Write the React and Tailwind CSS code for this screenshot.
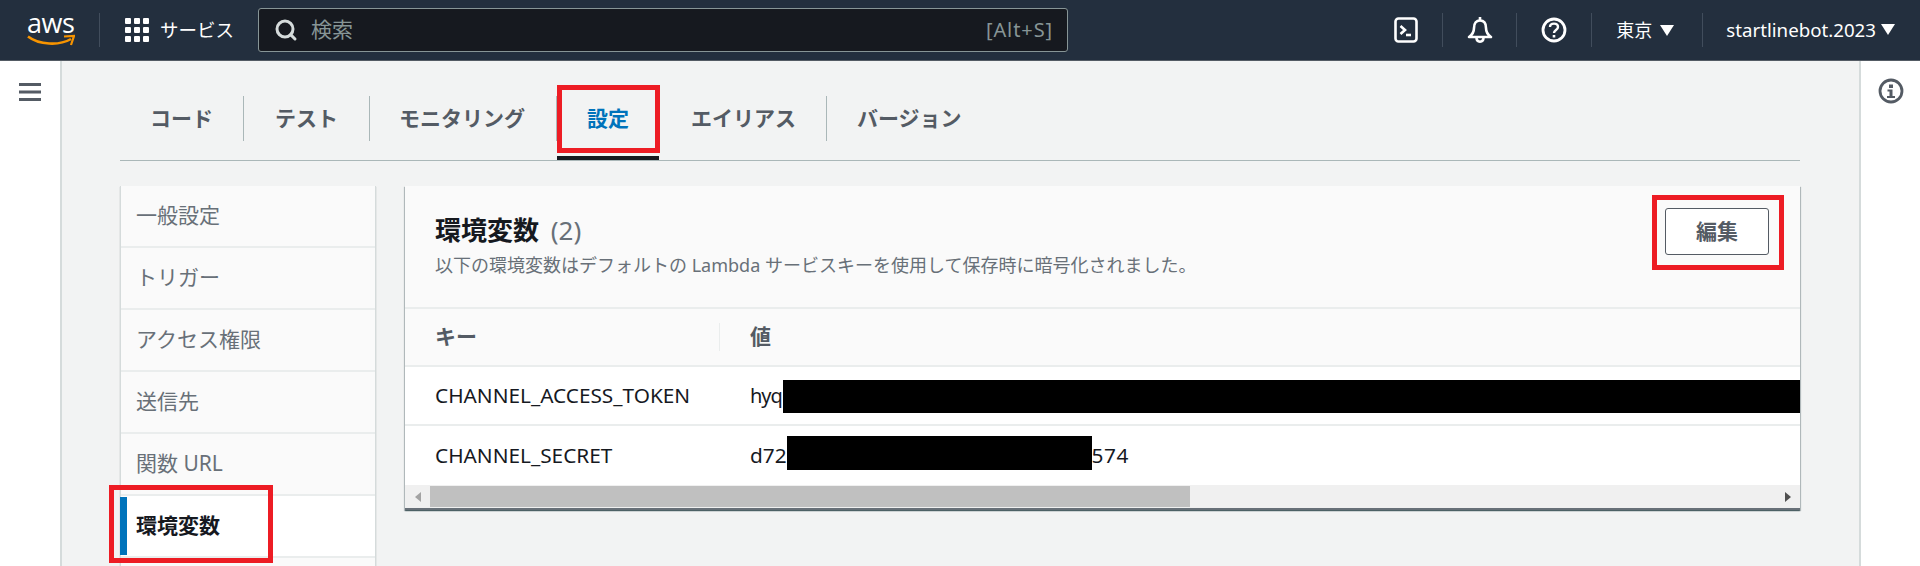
// App.jsx - Lambda configuration / environment variables
import { Search } from 'lucide-react'

const font = 'font-["Noto_Sans","Noto_Sans_CJK_JP",sans-serif]'

const sideItems = ['一般設定', 'トリガー', 'アクセス権限', '送信先', '関数 URL']

function RedBox({ className }) {
  return <div className={`absolute border-[5px] border-[#ed1c24] pointer-events-none ${className}`} />
}

function Caret() {
  return <span className="block w-0 h-0 border-x-[7px] border-x-transparent border-t-[11px] border-t-white" />
}

function HeaderDivider() {
  return <div className="w-px h-[34px] bg-[#414d5c]" />
}

function Header() {
  return (
    <header className="flex items-center h-[61px] shrink-0 bg-[#232f3e] border-b border-[#545b64] text-white">
      <div className="w-[99px] pl-[27px] flex flex-col items-start">
        <span className="text-[27px] leading-[22px] tracking-[-0.5px] font-['Open_Sans',sans-serif]">aws</span>
        <svg width="48" height="14" viewBox="0 0 48 14">
          <path d="M1 2.5 C12 11 32 12 44 5" fill="none" stroke="#f79400" strokeWidth="2.6" />
          <path d="M37 2.5 L47 2 L44 11" fill="none" stroke="#f79400" strokeWidth="2.2" />
        </svg>
      </div>
      <HeaderDivider />
      <div className="flex items-center pl-[25px] w-[158px]">
        <div className="grid grid-cols-3 gap-[3px] w-[24px] shrink-0 mr-[11px]">
          {[...Array(9)].map((_, i) => (
            <span key={i} className="w-[6px] h-[6px] bg-white rounded-[1px]" />
          ))}
        </div>
        <span className="text-[18.5px] whitespace-nowrap">サービス</span>
      </div>
      <div className="flex items-center w-[810px] h-[44px] bg-[#16191f] border border-[#879596] rounded-[3px] pl-[15px] pr-[14px]">
        <Search size={24} strokeWidth={3} className="text-[#d5dbdb] mr-[13px]" />
        <span className="flex-1 text-[21px] text-[#879596]">検索</span>
        <span className="text-[20px] tracking-[0.9px] text-[#879596]">[Alt+S]</span>
      </div>
      <div className="flex-1" />
      <div className="w-[72px] flex justify-center">
        <svg width="24" height="26" viewBox="0 0 24 26" fill="none" stroke="white" strokeWidth="2.6">
          <rect x="1.5" y="1.5" width="21" height="23" rx="3" />
          <path d="M6.5 9 L11 13 L6.5 17" />
          <path d="M12 18 H17" />
        </svg>
      </div>
      <HeaderDivider />
      <div className="w-[73px] flex justify-center">
        <svg width="26" height="28" viewBox="0 0 26 28" fill="none" stroke="white" strokeWidth="2.6">
          <path d="M13 1 V4" />
          <path d="M7 12 C7 7 9.5 4.5 13 4.5 C16.5 4.5 19 7 19 12 C19 16 21 19 24 21 H2 C5 19 7 16 7 12 Z" strokeLinejoin="round" />
          <path d="M9.5 21.5 C9.5 27 16.5 27 16.5 21.5" />
        </svg>
      </div>
      <HeaderDivider />
      <div className="w-[74px] flex justify-center">
        <svg width="26" height="26" viewBox="0 0 26 26" fill="none" stroke="white" strokeWidth="2.8">
          <circle cx="13" cy="13" r="11" />
          <path d="M9 10 C9 5.5 17 5.5 17 10 C17 13 13 13 13 16" strokeWidth="2.4" />
          <path d="M13 18 V20.5" strokeWidth="2.6" />
        </svg>
      </div>
      <HeaderDivider />
      <div className="w-[110px] flex items-center pl-6 gap-[8px]">
        <span className="text-[18px]">東京</span>
        <Caret />
      </div>
      <HeaderDivider />
      <div className="flex items-center pl-[23px] pr-[25px] gap-[5px]">
        <span className="text-[18.7px] whitespace-nowrap">startlinebot.2023</span>
        <Caret />
      </div>
    </header>
  )
}

function Tabs() {
  return (
    <div className="flex items-end h-[100px] border-b border-[#aab7b8] shrink-0">
      <div className="flex items-center h-[64px] pb-[19px] text-[21px] font-bold text-[#545b64]">
        <div className="px-[30px] h-[45px] flex items-center border-r border-[#aab7b8]">コード</div>
        <div className="px-[31px] h-[45px] flex items-center border-r border-[#aab7b8]">テスト</div>
        <div className="pl-[29px] pr-[31px] h-[45px] flex items-center border-r border-[#aab7b8]">モニタリング</div>
        <div className="relative w-[103px] h-[45px] flex items-center justify-center text-[#0073bb] border-r border-[#aab7b8]">
          設定
          <RedBox className="left-0 right-[-1px] top-[-11px] bottom-[-12px]" />
          <div className="absolute left-0 right-0 bottom-[-19px] h-[4px] bg-[#16191f]" />
        </div>
        <div className="pl-[31px] pr-[30px] h-[45px] flex items-center border-r border-[#aab7b8]">エイリアス</div>
        <div className="px-[30px] h-[45px] flex items-center">バージョン</div>
      </div>
    </div>
  )
}

function SideNav() {
  return (
    <nav className="w-[256px] shrink-0 bg-[#fafafa] border-x border-[#d5dbdb] shadow-[0_1px_1px_0_rgba(0,28,36,0.3)] text-[21px] text-[#687078]">
      {sideItems.map((t) => (
        <div key={t} className="h-[62px] flex items-center pl-[15px] border-b-2 border-[#eaeded]">{t}</div>
      ))}
      <div className="relative h-[62px] flex items-center pl-[15px] bg-white border-b-2 border-[#eaeded] font-bold text-[#16191f]">
        <div className="absolute left-[-1px] top-[1px] bottom-[1px] w-[7px] bg-[#0073bb]" />
        環境変数
        <RedBox className="left-[-12px] right-[102px] top-[-11px] bottom-[-7px]" />
      </div>
      <div className="h-[62px]" />
    </nav>
  )
}

function EnvPanel() {
  return (
    <section className="flex-1 h-[324px] flex flex-col bg-white shadow-[0_1px_1px_0_rgba(0,28,36,0.5),1px_1px_1px_0_rgba(0,28,36,0.2),-1px_1px_1px_0_rgba(0,28,36,0.2)]">
      <div className="relative h-[123px] shrink-0 flex justify-between bg-[#fafafa] border-b-2 border-[#eaeded] pl-[30px] pr-[31px]">
        <div className="pt-[21px]">
          <h2 className="text-[26px] leading-[46px] font-bold text-[#16191f]">
            環境変数 <span className="ml-[5px] font-normal text-[#687078]">(2)</span>
          </h2>
          <p className="text-[18px] leading-[24px] text-[#687078] whitespace-nowrap">
            以下の環境変数はデフォルトの Lambda サービスキーを使用して保存時に暗号化されました。
          </p>
        </div>
        <div className="relative h-[47px] mt-[22px]">
          <button className="w-[104px] h-[47px] bg-white border border-[#545b64] rounded-[3px] text-[21px] font-bold text-[#545b64]">編集</button>
          <RedBox className="left-[-13px] right-[-15px] top-[-13px] bottom-[-15px]" />
        </div>
      </div>
      <div className="h-[58px] shrink-0 flex items-center bg-[#fafafa] border-b-2 border-[#eaeded] text-[21px] font-bold text-[#545b64]">
        <div className="w-[315px] pl-[30px] h-[28px] flex items-center border-r border-[#eaeded]">キー</div>
        <div className="pl-[30px]">値</div>
      </div>
      <div className="h-[59px] shrink-0 flex items-center border-b-2 border-[#eaeded] text-[20.8px] text-[#16191f]">
        <div className="w-[345px] pl-[30px]">CHANNEL_ACCESS_TOKEN</div>
        <div className="flex-1 flex items-center">
          <span className="w-[33px] text-[20px] tracking-[-1px] whitespace-nowrap">hyq</span>
          <span className="flex-1 h-[33px] mt-[1px] bg-black" />
        </div>
      </div>
      <div className="h-[59px] shrink-0 flex items-center text-[20.8px] text-[#16191f]">
        <div className="w-[345px] pl-[30px]">CHANNEL_SECRET</div>
        <span>d72</span>
        <span className="w-[305px] h-[34px] -mt-[6px] bg-black" />
        <span className="tracking-[0.6px]">574</span>
      </div>
      <div className="flex-1 flex items-center bg-[#f0f0f0] border-b-2 border-[#687078]">
        <div className="w-[25px] flex justify-center">
          <span className="block w-0 h-0 border-y-[5px] border-y-transparent border-r-[6px] border-r-[#a3a3a3]" />
        </div>
        <div className="w-[760px] h-[21px] bg-[#c0c0c0]" />
        <div className="flex-1" />
        <div className="w-[25px] flex justify-center">
          <span className="block w-0 h-0 border-y-[5px] border-y-transparent border-l-[6px] border-l-[#505050]" />
        </div>
      </div>
    </section>
  )
}

export default function App() {
  return (
    <div className={`${font} w-[1920px] h-[566px] overflow-hidden flex flex-col bg-[#f2f3f3]`}>
      <Header />
      <div className="flex flex-1 min-h-0">
        <aside className="w-[62px] shrink-0 bg-white border-r-2 border-[#d5dbdb] flex justify-center pt-[22px]">
          <svg width="22" height="18" viewBox="0 0 22 18" fill="#545b64">
            <rect width="22" height="3" />
            <rect y="7.5" width="22" height="3" />
            <rect y="15" width="22" height="3" />
          </svg>
        </aside>
        <main className="flex-1 min-w-0 pl-[58px] pr-[59px]">
          <Tabs />
          <div className="flex gap-[29px] mt-[25px]">
            <SideNav />
            <EnvPanel />
          </div>
        </main>
        <aside className="w-[61px] shrink-0 bg-white border-l-2 border-[#d5dbdb] flex justify-center pt-[17px]">
          <svg width="26" height="26" viewBox="0 0 26 26" fill="none">
            <circle cx="13" cy="13" r="11" stroke="#545b64" strokeWidth="2.8" />
            <rect x="11" y="6.5" width="4" height="3.5" fill="#545b64" />
            <path d="M9.5 11.5 H14.5 V18 H17 V20 H9 V18 H11.5 V13.5 H9.5 Z" fill="#545b64" />
          </svg>
        </aside>
      </div>
    </div>
  )
}
